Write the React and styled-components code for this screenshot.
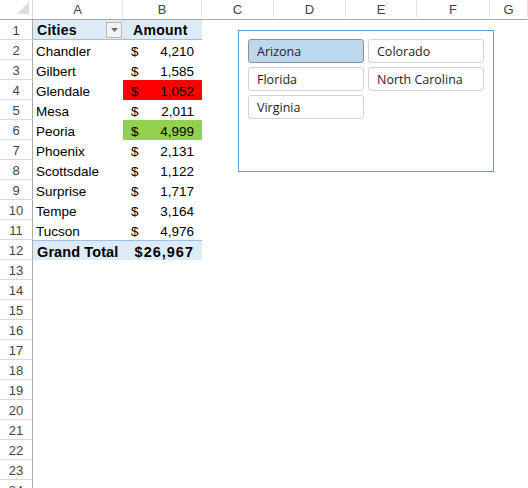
import styled, { createGlobalStyle } from 'styled-components';

const GlobalStyle = createGlobalStyle`
  html, body {
    margin: 0;
    padding: 0;
    background: #ffffff;
  }
  body {
    font-family: "Liberation Sans", Arial, sans-serif;
  }
`;

const columns = ['A', 'B', 'C', 'D', 'E', 'F', 'G'];
const colTemplate = '33px 90px 79px 72px 72px 71px 73px 1fr';

const data = [
  { city: 'Chandler', amount: '4,210' },
  { city: 'Gilbert', amount: '1,585' },
  { city: 'Glendale', amount: '1,052', fill: '#ff0000' },
  { city: 'Mesa', amount: '2,011' },
  { city: 'Peoria', amount: '4,999', fill: '#92d050' },
  { city: 'Phoenix', amount: '2,131' },
  { city: 'Scottsdale', amount: '1,122' },
  { city: 'Surprise', amount: '1,717' },
  { city: 'Tempe', amount: '3,164' },
  { city: 'Tucson', amount: '4,976' },
];

const states = [
  { name: 'Arizona', selected: true },
  { name: 'Colorado' },
  { name: 'Florida' },
  { name: 'North Carolina' },
  { name: 'Virginia' },
];

export default function App() {
  const emptyRows = [];
  for (let i = 13; i <= 24; i++) emptyRows.push(i);

  return (
    <>
      <GlobalStyle />
      <Sheet>
        <HeaderRow>
          <Corner>
            <svg width="12" height="12" viewBox="0 0 12 12">
              <polygon points="12,0 12,12 0,12" fill="#dcdcdc" />
            </svg>
          </Corner>
          {columns.map((c) => (
            <ColHeader key={c}>{c}</ColHeader>
          ))}
          <ColHeader />
        </HeaderRow>

        <Row>
          <RowNum>1</RowNum>
          <PivotHead>
            <span>Cities</span>
            <FilterButton>
              <svg width="7" height="4" viewBox="0 0 7 4">
                <polygon points="0,0 7,0 3.5,4" fill="#6b6b6b" />
              </svg>
            </FilterButton>
          </PivotHead>
          <PivotHead $amount>Amount</PivotHead>
        </Row>

        {data.map((d, i) => (
          <Row key={d.city}>
            <RowNum>{i + 2}</RowNum>
            <CityCell>{d.city}</CityCell>
            <AmountCell $fill={d.fill}>
              <span>$</span>
              <span>{d.amount}</span>
            </AmountCell>
          </Row>
        ))}

        <Row>
          <RowNum>12</RowNum>
          <TotalLabel>Grand Total</TotalLabel>
          <TotalValue>$26,967</TotalValue>
        </Row>

        {emptyRows.map((n) => (
          <Row key={n}>
            <RowNum>{n}</RowNum>
          </Row>
        ))}

        <Slicer>
          <SlicerGrid>
            {states.map((s) => (
              <SlicerButton key={s.name} $selected={s.selected}>
                {s.name}
              </SlicerButton>
            ))}
          </SlicerGrid>
        </Slicer>
      </Sheet>
    </>
  );
}

const Sheet = styled.div`
  position: relative;
  width: 528px;
  height: 488px;
  overflow: hidden;
  background: #ffffff;
`;

const HeaderRow = styled.div`
  display: grid;
  grid-template-columns: ${colTemplate};
  height: 20px;
  border-bottom: 1px solid #ababab;
  box-sizing: border-box;
`;

const Corner = styled.div`
  display: flex;
  align-items: flex-end;
  justify-content: flex-end;
  padding: 0 3px 3px 0;
  border-right: 1px solid #dadada;
`;

const ColHeader = styled.div`
  display: flex;
  align-items: center;
  justify-content: center;
  padding-top: 1px;
  font-size: 13px;
  color: #444444;
  border-right: 1px solid #e1e1e1;
  box-sizing: border-box;
`;

const Row = styled.div`
  display: grid;
  grid-template-columns: 33px 90px 79px 1fr;
  height: 20px;
  font-size: 13.5px;
  color: #000000;
`;

const RowNum = styled.div`
  display: flex;
  align-items: center;
  justify-content: center;
  padding-top: 2px;
  font-size: 13px;
  color: #444444;
  border-right: 1px solid #ababab;
  border-bottom: 1px solid #d9d9d9;
  box-sizing: border-box;
`;

const PivotHead = styled.div`
  display: flex;
  align-items: center;
  justify-content: space-between;
  padding: ${(p) => (p.$amount ? '1px 0 0 10px' : '1px 1px 0 4px')};
  background: #ddebf7;
  border-bottom: 1px solid #9bc2e6;
  font-weight: bold;
  font-size: 14px;
  letter-spacing: 0.3px;
  box-sizing: border-box;
`;

const FilterButton = styled.div`
  display: flex;
  align-items: center;
  justify-content: center;
  width: 14px;
  height: 14px;
  margin-top: -1px;
  border: 1px solid #b8b8b8;
  background: #f3f3f3;
`;

const CityCell = styled.div`
  display: flex;
  align-items: center;
  padding: 2px 0 0 3px;
`;

const AmountCell = styled.div`
  display: flex;
  align-items: center;
  justify-content: space-between;
  padding: 2px 8px 0 8px;
  background: ${(p) => p.$fill || 'transparent'};
`;

const TotalLabel = styled.div`
  display: flex;
  align-items: center;
  padding: 2px 0 0 4px;
  font-weight: bold;
  font-size: 14.5px;
  letter-spacing: 0.1px;
  background: #ddebf7;
  border-top: 1px solid #9bc2e6;
  box-sizing: border-box;
`;

const TotalValue = styled(TotalLabel)`
  justify-content: flex-end;
  padding: 2px 8px 0 0;
  letter-spacing: 1px;
`;

const Slicer = styled.div`
  position: absolute;
  left: 238px;
  top: 30px;
  width: 256px;
  height: 142px;
  box-sizing: border-box;
  border: 1px solid #5b9bd5;
  background: #ffffff;
  padding: 8px 9px;
`;

const SlicerGrid = styled.div`
  display: grid;
  grid-template-columns: 116px 116px;
  gap: 4px 4px;
`;

const SlicerButton = styled.div`
  height: 24px;
  box-sizing: border-box;
  display: flex;
  align-items: center;
  padding-left: 8px;
  border-radius: 3px;
  font-family: "Open Sans", "Noto Sans", sans-serif;
  font-size: 12.5px;
  color: #1f1f1f;
  background: ${(p) => (p.$selected ? '#bdd7ee' : '#ffffff')};
  border: 1px solid ${(p) => (p.$selected ? '#8e8e8e' : '#d4d4d4')};
`;
